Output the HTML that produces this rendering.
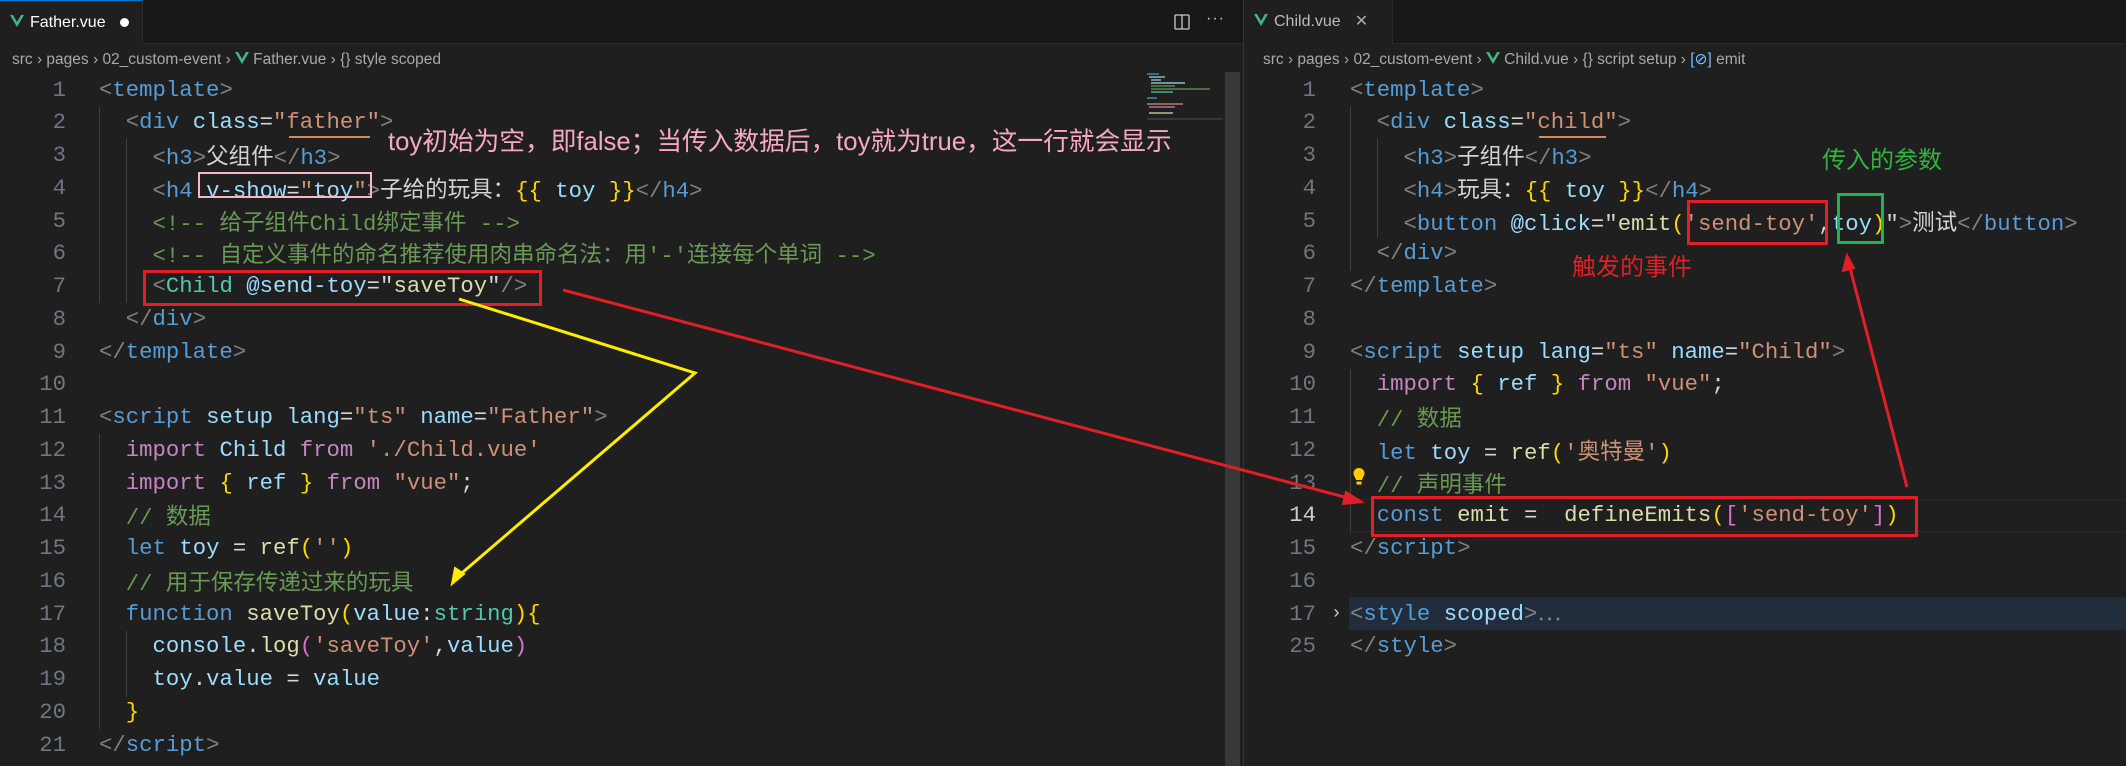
<!DOCTYPE html>
<html><head><meta charset="utf-8"><style>
*{margin:0;padding:0;box-sizing:border-box}
body{width:2126px;height:766px;background:#1f1f1f;position:relative;overflow:hidden;font-family:"Liberation Mono","Noto Sans CJK SC",monospace;font-size:22.3px;color:#d4d4d4}
.tabbar{position:absolute;top:0;height:44px;background:#181818;border-bottom:1px solid #2b2b2b}
.tab{position:absolute;top:0;height:44px;background:#1f1f1f;font-family:"Liberation Sans",sans-serif;font-size:16px;line-height:44px;color:#fff;border-right:1px solid #2b2b2b}
.bc{position:absolute;top:48px;height:24px;font-family:"Liberation Sans",sans-serif;font-size:15.5px;color:#a9a9a9;line-height:24px;white-space:pre}
.ln{position:absolute;height:33px;line-height:33px;text-align:right;color:#6e7681;width:50px}
.l{position:absolute;height:33px;line-height:33px;white-space:pre}
.c{font-family:"Noto Sans CJK SC",sans-serif;font-size:22.5px}
.t{color:#808080}.n{color:#569cd6}.a{color:#9cdcfe}.s{color:#ce9178}.cm{color:#6a9955}.k{color:#c586c0}.f{color:#dcdcaa}.g{color:#4ec9b0}.y{color:#ffd700}.p{color:#da70d6}.w{color:#d4d4d4}
.guide{position:absolute;width:1px;background:#404040}
.vv{display:inline-block;width:14px;height:16px;position:relative;top:2px;margin-right:6px}
</style></head><body>

<div class="tabbar" style="left:0;width:1243px"></div>
<div class="tabbar" style="left:1244px;width:882px"></div>
<div style="position:absolute;left:1243px;top:0;width:1px;height:766px;background:#333"></div>
<div class="tab" style="left:0;width:143px;border-top:1px solid #0078d4"><svg class="vv" viewBox="0 0 14 14" style="margin-left:10px"><path d="M0 1L7 13L14 1H11L7 8L3 1Z" fill="#41b883"/></svg>Father.vue<span style="display:inline-block;width:9px;height:9px;border-radius:50%;background:#fff;margin-left:14px"></span></div>
<div class="tab" style="left:1244px;width:149px;color:#bbb"><svg class="vv" viewBox="0 0 14 14" style="margin-left:10px"><path d="M0 1L7 13L14 1H11L7 8L3 1Z" fill="#41b883"/></svg>Child.vue<span style="margin-left:14px;color:#aaa">✕</span></div>
<svg style="position:absolute;left:1174px;top:14px" width="16" height="16" viewBox="0 0 16 16"><rect x="1" y="1" width="14" height="14" rx="1" fill="none" stroke="#ccc" stroke-width="1.3"/><line x1="8" y1="1" x2="8" y2="15" stroke="#ccc" stroke-width="1.3"/></svg>
<div style="position:absolute;left:1206px;top:10px;color:#ccc;font-family:'Liberation Sans';font-size:16px;letter-spacing:1px">···</div>

<div class="bc" style="left:12px">src › pages › 02_custom-event › <svg class="vv" viewBox="0 0 14 14" style="margin-right:4px"><path d="M0 1L7 13L14 1H11L7 8L3 1Z" fill="#41b883"/></svg>Father.vue › {} style scoped</div>
<div class="bc" style="left:1263px">src › pages › 02_custom-event › <svg class="vv" viewBox="0 0 14 14" style="margin-right:4px"><path d="M0 1L7 13L14 1H11L7 8L3 1Z" fill="#41b883"/></svg>Child.vue › {} script setup › <span style="color:#75beff">[⊘]</span> emit</div>

<div style="position:absolute;left:1225px;top:72px;width:15px;height:694px;background:#2a2a2a"></div>
<div style="position:absolute;left:1225px;top:72px;width:15px;height:694px;background:#424242;opacity:.6"></div>
<svg style="position:absolute;left:1145px;top:72px" width="80" height="50"><g stroke-width="1.2"><line x1="2" y1="2" x2="14" y2="2" stroke="#569cd6"/><line x1="4" y1="5" x2="20" y2="5" stroke="#9cdcfe"/><line x1="6" y1="8" x2="16" y2="8" stroke="#ccc"/><line x1="6" y1="11" x2="40" y2="11" stroke="#9cdcfe"/><line x1="6" y1="14" x2="30" y2="14" stroke="#6a9955"/><line x1="6" y1="17" x2="65" y2="17" stroke="#6a9955"/><line x1="6" y1="20" x2="28" y2="20" stroke="#4ec9b0"/><line x1="2" y1="26" x2="12" y2="26" stroke="#569cd6"/><line x1="2" y1="32" x2="38" y2="32" stroke="#ce9178"/><line x1="4" y1="35" x2="30" y2="35" stroke="#c586c0"/><line x1="4" y1="41" x2="28" y2="41" stroke="#dcdcaa"/><line x1="2" y1="47" x2="78" y2="47" stroke="#444"/></g></svg>

<div class="guide" style="left:99px;top:107px;height:196px"></div>
<div class="guide" style="left:126px;top:139px;height:164px"></div>
<div class="guide" style="left:99px;top:434px;height:295px"></div>
<div class="guide" style="left:126px;top:631px;height:66px"></div>
<div class="guide" style="left:1350px;top:107px;height:164px"></div>
<div class="guide" style="left:1377px;top:139px;height:98px"></div>
<div class="guide" style="left:1350px;top:369px;height:164px"></div>

<div style="position:absolute;left:1349px;top:499px;width:777px;height:33px;border-top:1px solid #282828;border-bottom:1px solid #282828"></div>
<div style="position:absolute;left:1349px;top:597px;width:777px;height:33px;background:#212d3a"></div>

<div class="ln" style="left:16px;top:74px">1</div><div class="l" style="left:99px;top:74px"><span class="t">&lt;</span><span class="n">template</span><span class="t">&gt;</span></div>
<div class="ln" style="left:16px;top:106px">2</div><div class="l" style="left:99px;top:106px">  <span class="t">&lt;</span><span class="n">div</span> <span class="a">class</span>=<span class="s">"father"</span><span class="t">&gt;</span></div>
<div class="ln" style="left:16px;top:139px">3</div><div class="l" style="left:99px;top:139px">    <span class="t">&lt;</span><span class="n">h3</span><span class="t">&gt;</span><span class="c">父组件</span><span class="t">&lt;/</span><span class="n">h3</span><span class="t">&gt;</span></div>
<div class="ln" style="left:16px;top:172px">4</div><div class="l" style="left:99px;top:172px">    <span class="t">&lt;</span><span class="n">h4</span> <span class="a">v-show</span>=<span class="s">"</span><span class="a">toy</span><span class="s">"</span><span class="t">&gt;</span><span class="c">子给的玩具：</span><span class="y">{{</span> <span class="a">toy</span> <span class="y">}}</span><span class="t">&lt;/</span><span class="n">h4</span><span class="t">&gt;</span></div>
<div class="ln" style="left:16px;top:205px">5</div><div class="l cm" style="left:99px;top:205px">    &lt;!-- <span class="c">给子组件</span>Child<span class="c">绑定事件</span> --&gt;</div>
<div class="ln" style="left:16px;top:237px">6</div><div class="l cm" style="left:99px;top:237px">    &lt;!-- <span class="c">自定义事件的命名推荐使用肉串命名法：用</span>'-'<span class="c">连接每个单词</span> --&gt;</div>
<div class="ln" style="left:16px;top:270px">7</div><div class="l" style="left:99px;top:270px">    <span class="t">&lt;</span><span class="g">Child</span> <span class="a">@send-toy</span>=<span class="w">"</span><span class="f">saveToy</span><span class="w">"</span><span class="t">/&gt;</span></div>
<div class="ln" style="left:16px;top:303px">8</div><div class="l" style="left:99px;top:303px">  <span class="t">&lt;/</span><span class="n">div</span><span class="t">&gt;</span></div>
<div class="ln" style="left:16px;top:336px">9</div><div class="l" style="left:99px;top:336px"><span class="t">&lt;/</span><span class="n">template</span><span class="t">&gt;</span></div>
<div class="ln" style="left:16px;top:368px">10</div>
<div class="ln" style="left:16px;top:401px">11</div><div class="l" style="left:99px;top:401px"><span class="t">&lt;</span><span class="n">script</span> <span class="a">setup</span> <span class="a">lang</span>=<span class="s">"ts"</span> <span class="a">name</span>=<span class="s">"Father"</span><span class="t">&gt;</span></div>
<div class="ln" style="left:16px;top:434px">12</div><div class="l" style="left:99px;top:434px">  <span class="k">import</span> <span class="a">Child</span> <span class="k">from</span> <span class="s">'./Child.vue'</span></div>
<div class="ln" style="left:16px;top:467px">13</div><div class="l" style="left:99px;top:467px">  <span class="k">import</span> <span class="y">{</span> <span class="a">ref</span> <span class="y">}</span> <span class="k">from</span> <span class="s">"vue"</span>;</div>
<div class="ln" style="left:16px;top:499px">14</div><div class="l cm" style="left:99px;top:499px">  // <span class="c">数据</span></div>
<div class="ln" style="left:16px;top:532px">15</div><div class="l" style="left:99px;top:532px">  <span class="n">let</span> <span class="a">toy</span> = <span class="f">ref</span><span class="y">(</span><span class="s">''</span><span class="y">)</span></div>
<div class="ln" style="left:16px;top:565px">16</div><div class="l cm" style="left:99px;top:565px">  // <span class="c">用于保存传递过来的玩具</span></div>
<div class="ln" style="left:16px;top:598px">17</div><div class="l" style="left:99px;top:598px">  <span class="n">function</span> <span class="f">saveToy</span><span class="y">(</span><span class="a">value</span>:<span class="g">string</span><span class="y">){</span></div>
<div class="ln" style="left:16px;top:630px">18</div><div class="l" style="left:99px;top:630px">    <span class="a">console</span>.<span class="f">log</span><span class="p">(</span><span class="s">'saveToy'</span>,<span class="a">value</span><span class="p">)</span></div>
<div class="ln" style="left:16px;top:663px">19</div><div class="l" style="left:99px;top:663px">    <span class="a">toy</span>.<span class="a">value</span> = <span class="a">value</span></div>
<div class="ln" style="left:16px;top:696px">20</div><div class="l" style="left:99px;top:696px">  <span class="y">}</span></div>
<div class="ln" style="left:16px;top:729px">21</div><div class="l" style="left:99px;top:729px"><span class="t">&lt;/</span><span class="n">script</span><span class="t">&gt;</span></div>

<div class="ln" style="left:1266px;top:74px">1</div><div class="l" style="left:1350px;top:74px"><span class="t">&lt;</span><span class="n">template</span><span class="t">&gt;</span></div>
<div class="ln" style="left:1266px;top:106px">2</div><div class="l" style="left:1350px;top:106px">  <span class="t">&lt;</span><span class="n">div</span> <span class="a">class</span>=<span class="s">"child"</span><span class="t">&gt;</span></div>
<div class="ln" style="left:1266px;top:139px">3</div><div class="l" style="left:1350px;top:139px">    <span class="t">&lt;</span><span class="n">h3</span><span class="t">&gt;</span><span class="c">子组件</span><span class="t">&lt;/</span><span class="n">h3</span><span class="t">&gt;</span></div>
<div class="ln" style="left:1266px;top:172px">4</div><div class="l" style="left:1350px;top:172px">    <span class="t">&lt;</span><span class="n">h4</span><span class="t">&gt;</span><span class="c">玩具：</span><span class="y">{{</span> <span class="a">toy</span> <span class="y">}}</span><span class="t">&lt;/</span><span class="n">h4</span><span class="t">&gt;</span></div>
<div class="ln" style="left:1266px;top:205px">5</div><div class="l" style="left:1350px;top:205px">    <span class="t">&lt;</span><span class="n">button</span> <span class="a">@click</span>=<span class="w">"</span><span class="f">emit</span><span class="y">(</span><span class="s">'send-toy'</span>,<span class="a">toy</span><span class="y">)</span><span class="w">"</span><span class="t">&gt;</span><span class="c">测试</span><span class="t">&lt;/</span><span class="n">button</span><span class="t">&gt;</span></div>
<div class="ln" style="left:1266px;top:237px">6</div><div class="l" style="left:1350px;top:237px">  <span class="t">&lt;/</span><span class="n">div</span><span class="t">&gt;</span></div>
<div class="ln" style="left:1266px;top:270px">7</div><div class="l" style="left:1350px;top:270px"><span class="t">&lt;/</span><span class="n">template</span><span class="t">&gt;</span></div>
<div class="ln" style="left:1266px;top:303px">8</div>
<div class="ln" style="left:1266px;top:336px">9</div><div class="l" style="left:1350px;top:336px"><span class="t">&lt;</span><span class="n">script</span> <span class="a">setup</span> <span class="a">lang</span>=<span class="s">"ts"</span> <span class="a">name</span>=<span class="s">"Child"</span><span class="t">&gt;</span></div>
<div class="ln" style="left:1266px;top:368px">10</div><div class="l" style="left:1350px;top:368px">  <span class="k">import</span> <span class="y">{</span> <span class="a">ref</span> <span class="y">}</span> <span class="k">from</span> <span class="s">"vue"</span>;</div>
<div class="ln" style="left:1266px;top:401px">11</div><div class="l cm" style="left:1350px;top:401px">  // <span class="c">数据</span></div>
<div class="ln" style="left:1266px;top:434px">12</div><div class="l" style="left:1350px;top:434px">  <span class="n">let</span> <span class="a">toy</span> = <span class="f">ref</span><span class="y">(</span><span class="s">'<span class="c">奥特曼</span>'</span><span class="y">)</span></div>
<div class="ln" style="left:1266px;top:467px">13</div><div class="l cm" style="left:1350px;top:467px">  // <span class="c">声明事件</span></div>
<div class="ln" style="left:1266px;top:499px;color:#ccc">14</div><div class="l" style="left:1350px;top:499px">  <span class="n">const</span> <span class="f">emit</span> =  <span class="f">defineEmits</span><span class="y">(</span><span class="p">[</span><span class="s">'send-toy'</span><span class="p">]</span><span class="y">)</span></div>
<div class="ln" style="left:1266px;top:532px">15</div><div class="l" style="left:1350px;top:532px"><span class="t">&lt;/</span><span class="n">script</span><span class="t">&gt;</span></div>
<div class="ln" style="left:1266px;top:565px">16</div>
<div class="ln" style="left:1266px;top:598px">17</div><div class="l" style="left:1331px;top:598px;color:#ccc;font-size:18px">›</div><div class="l" style="left:1350px;top:598px"><span class="t">&lt;</span><span class="n">style</span> <span class="a">scoped</span><span class="t">&gt;</span><span class="t">⋯</span></div>
<div class="ln" style="left:1266px;top:630px">25</div><div class="l" style="left:1350px;top:630px"><span class="t">&lt;/</span><span class="n">style</span><span class="t">&gt;</span></div>

<svg style="position:absolute;left:1352px;top:467px" width="14" height="22" viewBox="0 0 14 22"><path d="M7 1C3.5 1 1.5 3.5 1.5 6.5C1.5 9 3.5 10.5 4 13H10C10.5 10.5 12.5 9 12.5 6.5C12.5 3.5 10.5 1 7 1Z" fill="#ffcc00"/><rect x="4.5" y="14.5" width="5" height="3" fill="#ffcc00"/></svg>

<div style="position:absolute;left:289px;top:136px;width:81px;height:2px;background:#d7895a"></div>
<div style="position:absolute;left:1539px;top:136px;width:67px;height:2px;background:#d7895a"></div>

<div style="position:absolute;left:198px;top:172px;width:174px;height:26px;border:2px solid #f4b8c8"></div>
<div style="position:absolute;left:143px;top:270px;width:399px;height:36px;border:3px solid #e21e26"></div>
<div style="position:absolute;left:1371px;top:496px;width:547px;height:41px;border:3px solid #e21e26"></div>
<div style="position:absolute;left:1687px;top:200px;width:141px;height:45px;border:3px solid #e21e26"></div>
<div style="position:absolute;left:1837px;top:193px;width:47px;height:51px;border:3px solid #22b24c"></div>
<div style="position:absolute;left:388px;top:125px;font-family:'Liberation Sans','Noto Sans CJK SC',sans-serif;font-size:25.7px;color:#f6a8c2;white-space:pre;line-height:34px">toy初始为空，即false；当传入数据后，toy就为true，这一行就会显示</div>
<div style="position:absolute;left:1822px;top:142px;font-family:'Noto Sans CJK SC',sans-serif;font-size:24px;color:#2fb53f;line-height:32px">传入的参数</div>
<div style="position:absolute;left:1572px;top:249px;font-family:'Noto Sans CJK SC',sans-serif;font-size:24px;color:#e21e26;line-height:32px">触发的事件</div>

<svg style="position:absolute;left:0;top:0" width="2126" height="766">
<polyline points="459,299 695,373 456,578" fill="none" stroke="#ffec00" stroke-width="3"/>
<path d="M452,584 L455,568 L464,574 Z" fill="#ffec00" stroke="#ffec00" stroke-width="2"/>
<line x1="563" y1="290" x2="1352" y2="499" stroke="#e21e26" stroke-width="3"/>
<path d="M1362,502 L1346,492 L1343,504 Z" fill="#e21e26" stroke="#e21e26" stroke-width="2"/>
<line x1="1907" y1="487" x2="1849" y2="264" stroke="#e21e26" stroke-width="3"/>
<path d="M1847,255 L1843,271 L1854,268 Z" fill="#e21e26" stroke="#e21e26" stroke-width="2"/>
</svg>
</body></html>
